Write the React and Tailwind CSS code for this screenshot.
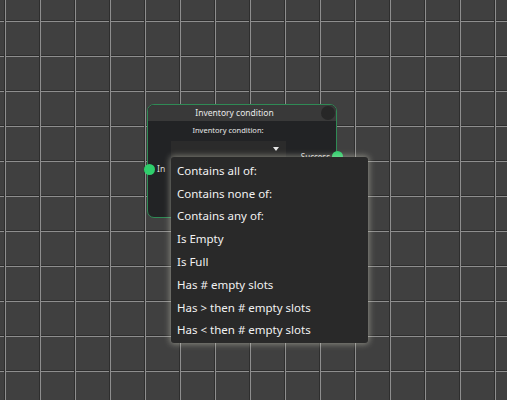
import React from 'react';

const options = [
  'Contains all of:',
  'Contains none of:',
  'Contains any of:',
  'Is Empty',
  'Is Full',
  'Has # empty slots',
  'Has > then # empty slots',
  'Has < then # empty slots',
];

const App = () => {
  return (
    <div
      className="relative w-[507px] h-[400px] overflow-hidden bg-[#404040] bg-[image:linear-gradient(to_right,#2e2e2e_0px,#2e2e2e_1px,#8e8e8e_1px,#8e8e8e_2px,transparent_2px),linear-gradient(to_bottom,#2e2e2e_0px,#2e2e2e_1px,#8e8e8e_1px,#8e8e8e_2px,transparent_2px)] bg-[size:35px_35px] bg-[position:4px_20px]"
      style={{ fontFamily: '"Noto Sans", "Open Sans", sans-serif' }}
    >
      {/* node */}
      <div className="absolute left-[147px] top-[104px] w-[190px] h-[114px] rounded-[7px] border border-[#2f8a55] bg-[#222325] flex flex-col">
        <div className="h-[16px] shrink-0 rounded-t-[6px] bg-[#393939] flex items-center justify-center pr-[15px] relative">
          <span className="text-[8.5px] text-[#e8e8e8] leading-none">Inventory condition</span>
          <div className="absolute right-[1px] top-[1px] w-[14px] h-[14px] rounded-full bg-[#272727]" />
        </div>
        <div className="flex flex-col items-center pt-[6px] pr-[28px]">
          <span className="text-[7.5px] text-[#e8e8e8] leading-none">Inventory condition:</span>
          <div className="mt-[6px] w-[115px] h-[17px] bg-[#2b2b2b] flex items-center justify-end pr-[7px]">
            <svg width="6" height="4" viewBox="0 0 6 4">
              <path d="M0 0 L6 0 L3 4 Z" fill="#e6e6e6" />
            </svg>
          </div>
        </div>
        {/* success pin */}
        <div className="absolute right-[-7px] top-[46px] flex items-center gap-[2px]">
          <span className="text-[8px] text-[#dcdcdc] leading-none">Success</span>
          <div className="w-[11px] h-[11px] rounded-full bg-[#2fce6c]" />
        </div>
        {/* in pin */}
        <div className="absolute left-[-4px] top-[59px] flex items-center gap-[2px]">
          <div className="w-[11px] h-[11px] rounded-full bg-[#2fce6c]" />
          <span className="text-[8.5px] text-[#dcdcdc] leading-none">In</span>
        </div>
      </div>

      {/* dropdown menu */}
      <div className="absolute left-[171px] top-[157px] w-[197px] h-[186px] rounded-[3px] bg-[#292929] pt-[2px] shadow-[0_0_6px_1px_rgba(230,230,210,0.45)]">
        {options.map((o) => (
          <div key={o} className="h-[22.8px] flex items-center pl-[6px] text-[11.5px] text-[#f2f2f2]">
            {o}
          </div>
        ))}
      </div>
    </div>
  );
};

export default App;
